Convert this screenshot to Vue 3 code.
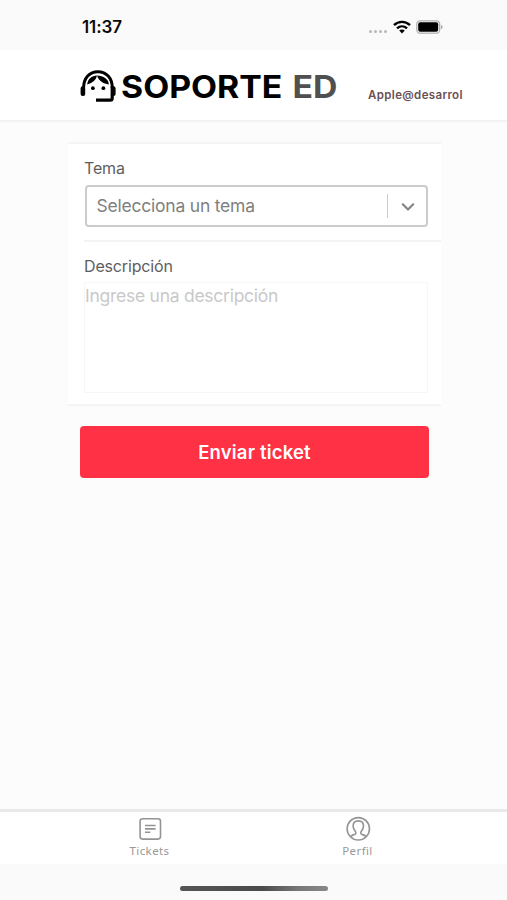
<script setup>
const tabs = [
  { id: 'tickets', label: 'Tickets' },
  { id: 'perfil', label: 'Perfil' },
]
</script>

<template>
  <div class="screen">
    <div class="status">
      <span class="time">11:37</span>
      <div class="indicators">
        <span class="signal"><i v-for="n in 4" :key="n"></i></span>
        <svg class="wifi" width="18" height="14" viewBox="0 0 18 14" fill="none" stroke="#000" stroke-width="2.4">
          <path d="M1 5.2C5.500.8 12.500.8 17 5.200" />
          <path d="M4 8.400c2.900-2.700 7.100-2.700 10 0" />
          <path d="M9 13.400 6.200 10.600c1.600-1.500 4-1.500 5.600 0z" fill="#000" stroke="none" />
        </svg>
        <svg class="battery" width="27" height="14" viewBox="0 0 27 14">
          <rect x=".8" y=".8" width="22.9" height="12.4" rx="3.5" fill="#fff" stroke="#b0b0b0" stroke-width="1.3" />
          <rect x="2.2" y="2.3" width="20" height="9.4" rx="2" fill="#000" />
          <path d="M25 5v4.200q1.700-.6 1.700-2.100T25 5z" fill="#aaa" />
        </svg>
      </div>
    </div>

    <header class="header">
      <svg class="agent" width="36" height="34" viewBox="0 0 36 34">
        <path d="M3.600 18C3.600 7.800 9.600 1.700 17.900 1.700S32.300 7.800 32.300 18" fill="none" stroke="#000" stroke-width="3" />
        <path d="M32.200 16v12.200q0 2-2 2H16" fill="none" stroke="#000" stroke-width="3.200" />
        <rect x=".6" y="16.300" width="4.600" height="9.800" rx="2.100" />
        <rect x="31" y="16.300" width="4.600" height="9.800" rx="2.100" />
        <path d="M7.200 14.400C7.700 9 11.500 5.800 17 5.600 16.200 9.800 12.800 13.200 7.200 14.400z" />
        <path d="M17 5.600c6.600.1 11.100 3.300 11.900 8.800C23.300 14.200 18.800 11 17 5.600z" />
        <circle cx="12.900" cy="18.200" r="1.900" />
        <circle cx="23.400" cy="18.200" r="1.900" />
      </svg>
      <h1 class="brand"><span>SOPORTE</span> <span class="suffix">ED</span></h1>
      <span class="account">Apple@desarrol</span>
    </header>

    <main class="content">
      <section class="card">
        <div class="row topic">
          <label>Tema</label>
          <div class="select">
            <span class="placeholder">Selecciona un tema</span>
            <span class="divider"></span>
            <svg width="14" height="9" viewBox="0 0 14 9" fill="none" stroke="#858585" stroke-width="2.2" stroke-linecap="round" stroke-linejoin="round">
              <path d="m1.800 2.300 5.200 5.200 5.200-5.200" />
            </svg>
          </div>
        </div>
        <div class="row description">
          <label>Descripción</label>
          <div class="textarea"><span>Ingrese una descripción</span></div>
        </div>
      </section>
      <button class="submit"><span>Enviar ticket</span></button>
    </main>

    <nav class="tabs">
      <div v-for="tab in tabs" :key="tab.id" class="tab">
        <svg v-if="tab.id === 'tickets'" width="26" height="26" viewBox="0 0 26 26" fill="none" stroke="#949494" stroke-width="1.6">
          <rect x="3.100" y="2.700" width="20.400" height="20.400" rx="2.500" />
          <path d="M8 9.500h10.600M8 12.900h10.600M8 16.300h5.300" />
        </svg>
        <svg v-else width="26" height="26" viewBox="0 0 26 26" fill="none" stroke="#949494" stroke-width="1.6">
          <circle cx="13.300" cy="12.800" r="11.200" />
          <path d="M5.600 20.500c1.300-1.400 3-1.500 4.300-2.200 1.500-.8 1.100-2.200.2-3.300-1.300-1.500-2-3.100-2-4.900 0-3.200 2.200-5.200 5.200-5.200s5.200 2 5.200 5.200c0 1.800-.7 3.400-2 4.900-.9 1.100-1.300 2.500.2 3.300 1.300.7 3 .8 4.300 2.200" />
        </svg>
        <span>{{ tab.label }}</span>
      </div>
    </nav>
    <div class="home"><div class="bar"></div></div>
  </div>
</template>

<style>
body {
  margin: 0;
}
</style>

<style scoped>
.screen {
  width: 507px;
  height: 900px;
  display: flex;
  flex-direction: column;
  background: #fcfcfc;
  font-family: Inter, "Liberation Sans", sans-serif;
  overflow: hidden;
}
.status {
  height: 50px;
  box-sizing: border-box;
  flex: none;
  display: flex;
  justify-content: space-between;
  padding: 17px 64.5px 0 82px;
  background: #fafafa;
}
.time {
  font-size: 17px;
  line-height: 21px;
  font-weight: 600;
  letter-spacing: -0.1px;
  color: #0a0a0a;
}
.indicators {
  display: flex;
  align-items: flex-start;
  padding-top: 3px;
}
.signal {
  display: flex;
  gap: 2px;
  padding-top: 10px;
  margin-right: 6px;
}
.signal i {
  width: 3px;
  height: 3px;
  border-radius: 50%;
  background: #b8b8b8;
}
.wifi {
  margin-right: 5px;
}
.header {
  height: 72px;
  box-sizing: border-box;
  flex: none;
  display: flex;
  align-items: flex-start;
  padding: 19px 0 0 80px;
  background: #fff;
  border-bottom: 2px solid #f3f3f3;
}
.agent {
  margin-top: 1px;
}
.brand {
  margin: 0 0 0 5px;
  width: 247px;
  font-size: 31px;
  line-height: 36px;
  font-weight: 700;
  letter-spacing: 0;
  word-spacing: 2px;
  white-space: nowrap;
  transform: scaleX(1.09);
  transform-origin: left;
  color: #000;
}
.suffix {
  color: #505050;
}
.account {
  padding-top: 18px;
  font-size: 11.5px;
  line-height: 17px;
  font-weight: 600;
  letter-spacing: 0.35px;
  color: #6b4f54;
}
.content {
  flex: 1;
  padding: 20px 66px 0 68px;
}
.card {
  display: flex;
  flex-direction: column;
  background: #fff;
  border-top: 2px solid #f4f4f4;
  border-bottom: 2px solid #f4f4f4;
  box-sizing: border-box;
  height: 264px;
  padding-left: 16px;
}
.row {
  box-sizing: border-box;
  padding-right: 13px;
}
.topic {
  height: 98px;
  padding-top: 13px;
  border-bottom: 2px solid #f4f4f4;
}
.description {
  padding-top: 13px;
}
label {
  display: block;
  font-size: 16px;
  line-height: 22px;
  letter-spacing: -0.15px;
  color: #5e5e5e;
}
.select {
  box-sizing: border-box;
  height: 42px;
  margin: 6px 0 0 1px;
  display: flex;
  align-items: center;
  padding: 0 11.5px 0 9.5px;
  border: 2px solid #cbcbcb;
  border-radius: 4px;
}
.placeholder {
  flex: 1;
  font-size: 17.5px;
  line-height: 20px;
  padding-bottom: 1px;
  letter-spacing: -0.22px;
  color: #7f7f7f;
}
.divider {
  width: 1px;
  height: 24px;
  margin-right: 13px;
  background: #ccc;
}
.textarea {
  box-sizing: border-box;
  height: 111px;
  margin-top: 5px;
  padding-top: 1px;
  border: 1px solid #f7f7f7;
  font-size: 17.5px;
  line-height: 24px;
  letter-spacing: -0.26px;
  color: #c9c9c9;
}
.submit {
  display: block;
  width: 349px;
  height: 52px;
  margin: 20px 0 0 12px;
  padding: 0;
  border: 0;
  border-radius: 4px;
  background: #ff3144;
  color: #fff;
  font-family: inherit;
  font-size: 18.5px;
  font-weight: 600;
  letter-spacing: 0.17px;
}
.tabs {
  height: 55px;
  box-sizing: border-box;
  flex: none;
  display: grid;
  grid-template-columns: 208px 208px;
  justify-content: center;
  padding-top: 4px;
  border-top: 3px solid #e9e9e9;
  background: #fff;
}
.tab {
  display: flex;
  flex-direction: column;
  align-items: center;
}
.tab span {
  margin-top: 2px;
  font-family: "Noto Sans", sans-serif;
  font-size: 11.5px;
  line-height: 14px;
  letter-spacing: 0.4px;
  color: #999;
}
.home {
  height: 36px;
  flex: none;
  display: flex;
  justify-content: center;
  background: #fafafa;
}
.bar {
  width: 148px;
  height: 5px;
  margin-top: 22px;
  border-radius: 3px;
  background: linear-gradient(90deg, #555, #4a4a4a 55%, #777 80%, #888);
}
</style>
